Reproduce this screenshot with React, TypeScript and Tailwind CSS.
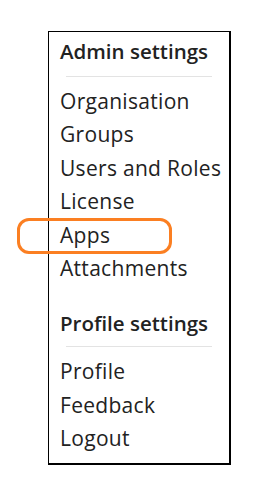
const adminItems = ['Organisation', 'Groups', 'Users and Roles', 'License', 'Apps', 'Attachments'];
const profileItems = ['Profile', 'Feedback', 'Logout'];

function MenuItem({ label, highlighted }: { label: string; highlighted?: boolean }) {
  return (
    <li className="relative h-[33.4px] leading-[33.4px]">
      {highlighted && (
        <span className="pointer-events-none absolute left-[-43px] top-[-1px] h-[36px] w-[155px] rounded-[12px] border-[3px] border-[#fb7f22]" />
      )}
      {label}
    </li>
  );
}

function Section({
  title,
  items,
  highlight,
  dividerClass,
}: {
  title: string;
  items: string[];
  highlight?: string;
  dividerClass: string;
}) {
  return (
    <div className="flex flex-col">
      <h3 className="h-[33px] text-[20.5px] font-semibold leading-[33px] tracking-normal text-[#222]">{title}</h3>
      <div className={`ml-[6px] mr-[17px] h-px bg-[#e3e3e3] ${dividerClass}`} />
      <ul className="flex flex-col">
        {items.map((item) => (
          <MenuItem key={item} label={item} highlighted={item === highlight} />
        ))}
      </ul>
    </div>
  );
}

export default function App() {
  return (
    <div className="min-h-[484px] w-[259px] bg-white pl-[48px] pt-[31px] font-['Open_Sans',sans-serif] text-[21px] tracking-[0.3px] text-[#222]">
      <div className="flex h-[434px] w-[183px] flex-col gap-[22px] border border-r-2 border-b-2 border-black pl-[11px] pt-[3px]">
        <Section title="Admin settings" items={adminItems} highlight="Apps" dividerClass="mt-[8px] mb-[8px]" />
        <Section title="Profile settings" items={profileItems} dividerClass="mt-[6px] mb-[8px]" />
      </div>
    </div>
  );
}
